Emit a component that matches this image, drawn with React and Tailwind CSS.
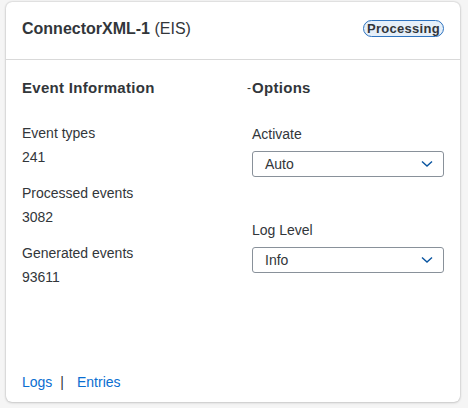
import React from 'react'

const Chevron = () => (
  <svg width="12" height="8" viewBox="0 0 12 8" fill="none" className="shrink-0">
    <path d="M1 1.5 L6 6 L11 1.5" stroke="#0854a0" strokeWidth="1.4" />
  </svg>
)

const Select = ({ value }) => (
  <div className="mt-[8px] h-[26px] flex items-center justify-between border border-[#89919a] rounded-[3px] pl-[12px] pr-[10px] bg-white">
    <span className="text-[14px] text-[#32363a]">{value}</span>
    <Chevron />
  </div>
)

const Field = ({ label, value, top }) => (
  <div className={top}>
    <div className="text-[14px] leading-[18px] text-[#32363a]">{label}</div>
    <div className="mt-[6px] text-[14px] leading-[18px] text-[#32363a]">{value}</div>
  </div>
)

export default function App() {
  return (
    <div className="w-[468px] h-[408px] bg-[#f5f5f5] pt-[2px] px-[6px] font-['Liberation_Sans',Arial,sans-serif]">
      <div className="w-[454px] h-[400px] bg-white rounded-[6px] shadow-[0_0_2px_rgba(0,0,0,0.25),0_1px_3px_rgba(0,0,0,0.12)] flex flex-col">
        {/* header */}
        <div className="h-[58px] flex items-center justify-between pl-4 pr-4 pb-[4px] border-b border-[#d9d9d9]">
          <div className="text-[16px] text-[#32363a]">
            <span className="font-bold">ConnectorXML-1</span> (EIS)
          </div>
          <span className="h-[17px] px-[3px] flex items-center rounded-full border border-[#2f74c0] bg-[#e5eff9] text-[13px] tracking-[0.3px] font-bold text-[#32363a] leading-none">
            Processing
          </span>
        </div>

        {/* body */}
        <div className="flex pl-4 pr-[16px]">
          <div className="w-[230px]">
            <div className="mt-[18px] text-[15px] leading-5 font-bold tracking-[0.3px] text-[#32363a]">Event Information</div>
            <Field top="mt-[26px]" label="Event types" value="241" />
            <Field top="mt-[18px]" label="Processed events" value="3082" />
            <Field top="mt-[18px]" label="Generated events" value="93611" />
          </div>
          <div className="flex-1">
            <div className="mt-[18px] text-[15px] leading-5 font-bold tracking-[0.3px] text-[#32363a] relative">
              <span className="absolute left-[-5px] top-0 font-normal text-[12px]">-</span>
              Options
            </div>
            <div className="mt-[27px] text-[14px] leading-[18px] text-[#32363a]">Activate</div>
            <Select value="Auto" />
            <div className="mt-[44px] text-[14px] leading-[18px] text-[#32363a]">Log Level</div>
            <Select value="Info" />
          </div>
        </div>

        {/* footer */}
        <div className="mt-auto pl-4 pb-[11px] flex items-center text-[14px] leading-[18px]">
          <a className="text-[#0a6ed1]">Logs</a>
          <span className="ml-[8px] text-[#32363a]">|</span>
          <a className="ml-[13px] text-[#0a6ed1]">Entries</a>
        </div>
      </div>
    </div>
  )
}
